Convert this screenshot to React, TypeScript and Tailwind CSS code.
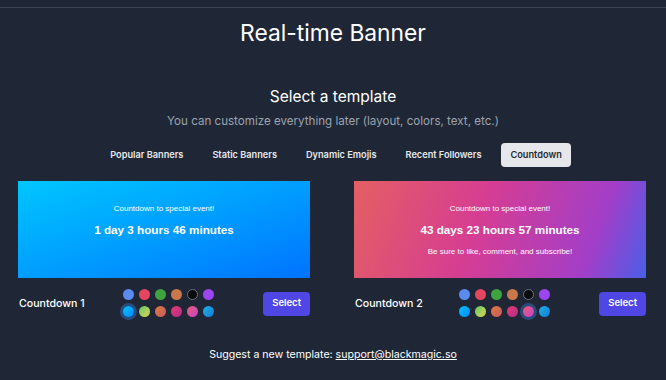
import React from "react";

const row1 = [
  "bg-[#5b8bef]",
  "bg-[#e2475f]",
  "bg-[#3fa33f]",
  "bg-[#c9784c]",
  "bg-[#0b0b0b] border border-[#6b7280]",
  "bg-[#9b46f0]",
];
const row2 = [
  "bg-gradient-to-br from-[#00c6ff] to-[#0a84ff]",
  "bg-gradient-to-br from-[#5fc46a] to-[#d8d64a]",
  "bg-gradient-to-br from-[#e07a3c] to-[#c45a5c]",
  "bg-gradient-to-br from-[#e83c6e] to-[#b02a8a]",
  "bg-gradient-to-br from-[#ef5a7a] to-[#c23fc0]",
  "bg-gradient-to-br from-[#1fb4e8] to-[#1a78d0]",
];

function Dots({ selected }: { selected: number }) {
  return (
    <div className="flex flex-col gap-[6px] -mt-[1px]">
      <div className="flex gap-[5px]">
        {row1.map((c, i) => (
          <div key={i} className={`w-[11px] h-[11px] rounded-full ${c}`} />
        ))}
      </div>
      <div className="flex gap-[5px]">
        {row2.map((c, i) => (
          <div
            key={i}
            className={`w-[11px] h-[11px] rounded-full ${c} ${
              i === selected ? "shadow-[0_0_0_3px_rgba(47,100,170,0.6)]" : ""
            }`}
          />
        ))}
      </div>
    </div>
  );
}

function Card({
  gradient,
  time,
  extra,
  name,
  selected,
}: {
  gradient: string;
  time: string;
  extra?: string;
  name: string;
  selected: number;
}) {
  return (
    <div className="flex flex-col">
      <div
        className={`h-[97px] flex flex-col items-center pt-[23px] text-white ${gradient}`}
        style={{ fontFamily: '"Liberation Sans", Arial, sans-serif' }}
      >
        <div className="text-[8px] leading-[10px]">Countdown to special event!</div>
        <div className="text-[11.7px] leading-[16px] font-bold mt-[8px]">{time}</div>
        {extra && <div className="text-[8px] leading-[10px] mt-[9px]">{extra}</div>}
      </div>
      <div className="flex items-center justify-between mt-[12px] pl-[1px]">
        <div className="text-[10.6px] font-medium text-white w-[104px]">{name}</div>
        <Dots selected={selected} />
        <button className="ml-auto h-[24px] px-[9px] rounded-[4px] bg-[#4f46e5] text-white text-[9.5px] font-semibold">
          Select
        </button>
      </div>
    </div>
  );
}

export default function App() {
  const tabs = ["Popular Banners", "Static Banners", "Dynamic Emojis", "Recent Followers", "Countdown"];
  return (
    <div
      className="w-[666px] h-[380px] bg-[#1f2736] text-white overflow-hidden pt-[7px]"
      style={{ fontFamily: 'Inter, "Noto Sans", sans-serif' }}
    >
      <div className="border-t border-[#3a4352]" />
      <h1 className="text-center text-[22.8px] leading-[32px] mt-[9px]">Real-time Banner</h1>
      <h2 className="text-center text-[15.5px] leading-[28px] mt-[34px]">Select a template</h2>
      <p className="text-center text-[11.6px] leading-[20px] text-[#9ca3af]">
        You can customize everything later (layout, colors, text, etc.)
      </p>
      <div className="flex justify-center gap-[11px] mt-[12px] pl-[6px]">
        {tabs.map((t) => (
          <div
            key={t}
            className={`h-[24px] px-[9px] flex items-center rounded-[4px] text-[9.2px] font-semibold ${
              t === "Countdown" ? "bg-[#e5e7eb] text-[#1f2937]" : "text-[#e5e7eb]"
            }`}
          >
            {t}
          </div>
        ))}
      </div>
      <div className="grid grid-cols-2 gap-[44px] pl-[18px] pr-[20px] mt-[14px]">
        <Card
          gradient="bg-gradient-to-br from-[#00c6ff] to-[#0072ff]"
          time="1 day 3 hours 46 minutes"
          name="Countdown 1"
          selected={0}
        />
        <Card
          gradient="bg-[linear-gradient(110deg,#e45f62_0%,#d63d92_42%,#a33ec8_80%,#4a5ee8_100%)]"
          time="43 days 23 hours 57 minutes"
          extra="Be sure to like, comment, and subscribe!"
          name="Countdown 2"
          selected={4}
        />
      </div>
      <p className="text-center text-[10.6px] leading-[20px] mt-[28px]">
        Suggest a new template: <a className="underline">support@blackmagic.so</a>
      </p>
    </div>
  );
}
